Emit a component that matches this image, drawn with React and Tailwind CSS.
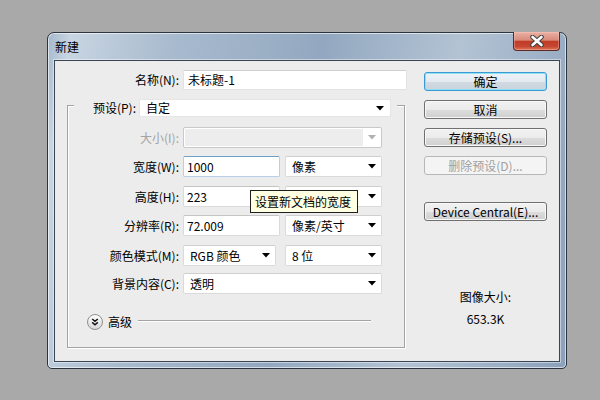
import React from 'react'

const font = { fontFamily: '"Noto Sans CJK SC", "Liberation Sans", sans-serif' }

function Arrow({ gray }) {
    return (
        <svg width="8" height="5" viewBox="0 0 8 5" className="shrink-0">
            <path d="M0 0 L8 0 L4 4.5 Z" fill={gray ? '#b0b0b0' : '#000'} />
        </svg>
    )
}

function Select({ w, value, className = '' }) {
    return (
        <div className={`${w} h-[21px] bg-white border border-[#dadada] border-t-[#cfcfcf] rounded-[2px] flex items-center pl-[6px] pr-[5px] ${className}`}>
            <span className="flex-1 truncate">{value}</span>
            <Arrow />
        </div>
    )
}

function Input({ w, value, focus }) {
    return (
        <div
            className={`${w} h-[21px] bg-white rounded-[2px] flex items-center pl-[3px] border ${
                focus ? 'border-[#b5d0e8] border-t-[#6d9ec8]' : 'border-[#dadada] border-t-[#c4c4c4]'
            }`}
        >
            {value}
        </div>
    )
}

function Row({ label, children, mt, gray }) {
    return (
        <div className={`flex items-center h-[21px] ${mt}`}>
            <div className={`w-[111px] text-right ${gray ? 'text-[#a3a3a3]' : ''}`}>{label}</div>
            <div className="ml-[4px] flex items-center relative">{children}</div>
        </div>
    )
}

function Button({ label, primary, disabled, mt = '' }) {
    const cls = disabled
        ? 'border-[#b5b8bb] text-[#a0a0a0] bg-[#f4f4f4]'
        : primary
        ? 'border-[#3c9ad3] shadow-[inset_0_0_0_1px_#8ee0f8] bg-[linear-gradient(#eef3f7_0%,#e3eaf0_50%,#d2dbe2_51%,#c9d3db_100%)]'
        : 'border-[#707070] shadow-[inset_0_0_0_1px_#f8f8f8] bg-[linear-gradient(#f2f2f2_0%,#ebebeb_50%,#dddddd_51%,#cfcfcf_100%)]'
    return (
        <div className={`h-[19px] w-[123px] rounded-[3px] border flex items-center justify-center ${cls} ${mt}`}>
            {label}
        </div>
    )
}

export default function App() {
    return (
        <div className="w-[600px] h-[400px] bg-[#a9a9a9] pt-[32px] pl-[47px] text-[12px] leading-[16px] text-black" style={font}>
            <div className="w-[520px] h-[337px] rounded-t-[7px] rounded-b-[5px] border border-[#2c3440] shadow-[inset_0_0_0_1px_rgba(255,255,255,0.6)] bg-[linear-gradient(100deg,#a3b7cc_0%,#c8d5e2_4%,#a8bace_22%,#93a8c0_48%,#b3c3d4_72%,#8ba1bb_100%)] flex flex-col">
                {/* title bar */}
                <div className="h-[27px] flex items-start shrink-0">
                    <span className="self-center pl-[7px]">新建</span>
                    <div className="ml-auto mr-[6px] -mt-[1px] w-[47px] h-[19px] rounded-b-[4px] border border-[#5a2b25] border-t-0 bg-[linear-gradient(#eab1a4_0%,#d98b7b_45%,#c23b27_52%,#c54631_80%,#df7459_100%)] shadow-[inset_0_0_0_1px_rgba(255,210,200,0.35)] flex items-center justify-center">
                        <svg width="14" height="12" viewBox="0 0 14 12">
                            <path d="M2.5 2 L11.5 10 M11.5 2 L2.5 10" stroke="#3f3f3f" strokeWidth="4.6" strokeLinecap="round" />
                            <path d="M2.5 2 L11.5 10 M11.5 2 L2.5 10" stroke="#fff" strokeWidth="2.6" strokeLinecap="round" />
                        </svg>
                    </div>
                </div>

                {/* content */}
                <div className="ml-[6px] w-[506px] h-[302px] border border-[#3a4452] bg-[#ececec] flex shadow-[0_0_0_1px_rgba(255,255,255,0.45)]">
                    {/* left column */}
                    <div className="w-[353px] pl-[12px] pt-[9px] shrink-0">
                        <div className="flex items-center h-[20px]">
                            <div className="w-[112px] text-right">名称(N):</div>
                            <div className="ml-[4px] w-[224px] h-[20px] bg-white border border-[#e2e2e2] border-t-[#d0d0d0] rounded-[2px] flex items-center pl-[4px]">
                                未标题-1
                            </div>
                        </div>

                        <div className="mt-[15px] w-[338px] h-[243px] border border-[#a3a3a3] shadow-[1px_1px_0_#fff,inset_1px_1px_0_#fff]">
                            {/* legend */}
                            <div className="-mt-[7px] ml-[6px] w-[323px] h-[18px] flex items-center bg-[#ececec]">
                                <div className="w-[62px] text-right">预设(P):</div>
                                <div className="ml-[3px] w-[252px] h-[18px] bg-white border border-[#e6e6e6] rounded-[2px] flex items-center pl-[6px] pr-[6px]">
                                    <span className="flex-1">自定</span>
                                    <Arrow />
                                </div>
                            </div>

                            <Row label="大小(I):" mt="mt-[10px]" gray>
                                <div className="w-[199px] h-[21px] border border-[#c9c9c9] rounded-[2px] flex bg-white">
                                    <div className="w-[178px] bg-[#ededed] m-[1px] mr-0" />
                                    <div className="flex-1 flex items-center justify-center">
                                        <Arrow gray />
                                    </div>
                                </div>
                            </Row>
                            <Row label="宽度(W):" mt="mt-[8px]">
                                <Input w="w-[97px]" value="1000" focus />
                                <Select w="w-[97px]" value="像素" className="ml-[5px]" />
                            </Row>
                            <Row label="高度(H):" mt="mt-[9px]">
                                <Input w="w-[97px]" value="223" />
                                <Select w="w-[97px]" value="" className="ml-[5px]" />
                                <div className="absolute left-[67px] top-[4px] h-[23px] w-[108px] bg-[#ffffe1] border border-[#1f1f1f] flex items-center pl-[4px] whitespace-nowrap">
                                    设置新文档的宽度
                                </div>
                            </Row>
                            <Row label="分辨率(R):" mt="mt-[8px]">
                                <Input w="w-[97px]" value="72.009" />
                                <Select w="w-[97px]" value="像素/英寸" className="ml-[5px]" />
                            </Row>
                            <Row label="颜色模式(M):" mt="mt-[9px]">
                                <Select w="w-[93px]" value="RGB 颜色" />
                                <Select w="w-[97px]" value="8 位" className="ml-[9px]" />
                            </Row>
                            <Row label="背景内容(C):" mt="mt-[7px]">
                                <Select w="w-[199px]" value="透明" />
                            </Row>

                            {/* advanced */}
                            <div className="mt-[20px] pl-[19px] h-[16px] flex items-center">
                                <svg width="16" height="16" viewBox="0 0 16 16" className="shrink-0">
                                    <defs>
                                        <linearGradient id="adv" x1="0" y1="0" x2="0" y2="1">
                                            <stop offset="0" stopColor="#ffffff" />
                                            <stop offset="1" stopColor="#d6d6d6" />
                                        </linearGradient>
                                    </defs>
                                    <circle cx="8" cy="8" r="7.5" fill="url(#adv)" stroke="#8e8e8e" />
                                    <path d="M5.2 5 L8 7.4 L10.8 5 M5.2 8.4 L8 10.8 L10.8 8.4" fill="none" stroke="#111" strokeWidth="1.4" />
                                </svg>
                                <span className="ml-[5px]">高级</span>
                                <div className="ml-[6px] w-[233px] h-[2px] -mt-[3px] border-t border-[#a3a3a3] border-b border-b-white" />
                            </div>
                        </div>
                    </div>

                    {/* right column */}
                    <div className="ml-[16px] pt-[11px] w-[123px] flex flex-col">
                        <Button label="确定" primary />
                        <Button label="取消" mt="mt-[9px]" />
                        <Button label="存储预设(S)..." mt="mt-[9px]" />
                        <Button label="删除预设(D)..." disabled mt="mt-[9px]" />
                        <Button label="Device Central(E)..." mt="mt-[27px]" />
                        <div className="mt-[68px] text-center">图像大小:</div>
                        <div className="mt-[6px] text-center">653.3K</div>
                    </div>
                </div>
            </div>
        </div>
    )
}
